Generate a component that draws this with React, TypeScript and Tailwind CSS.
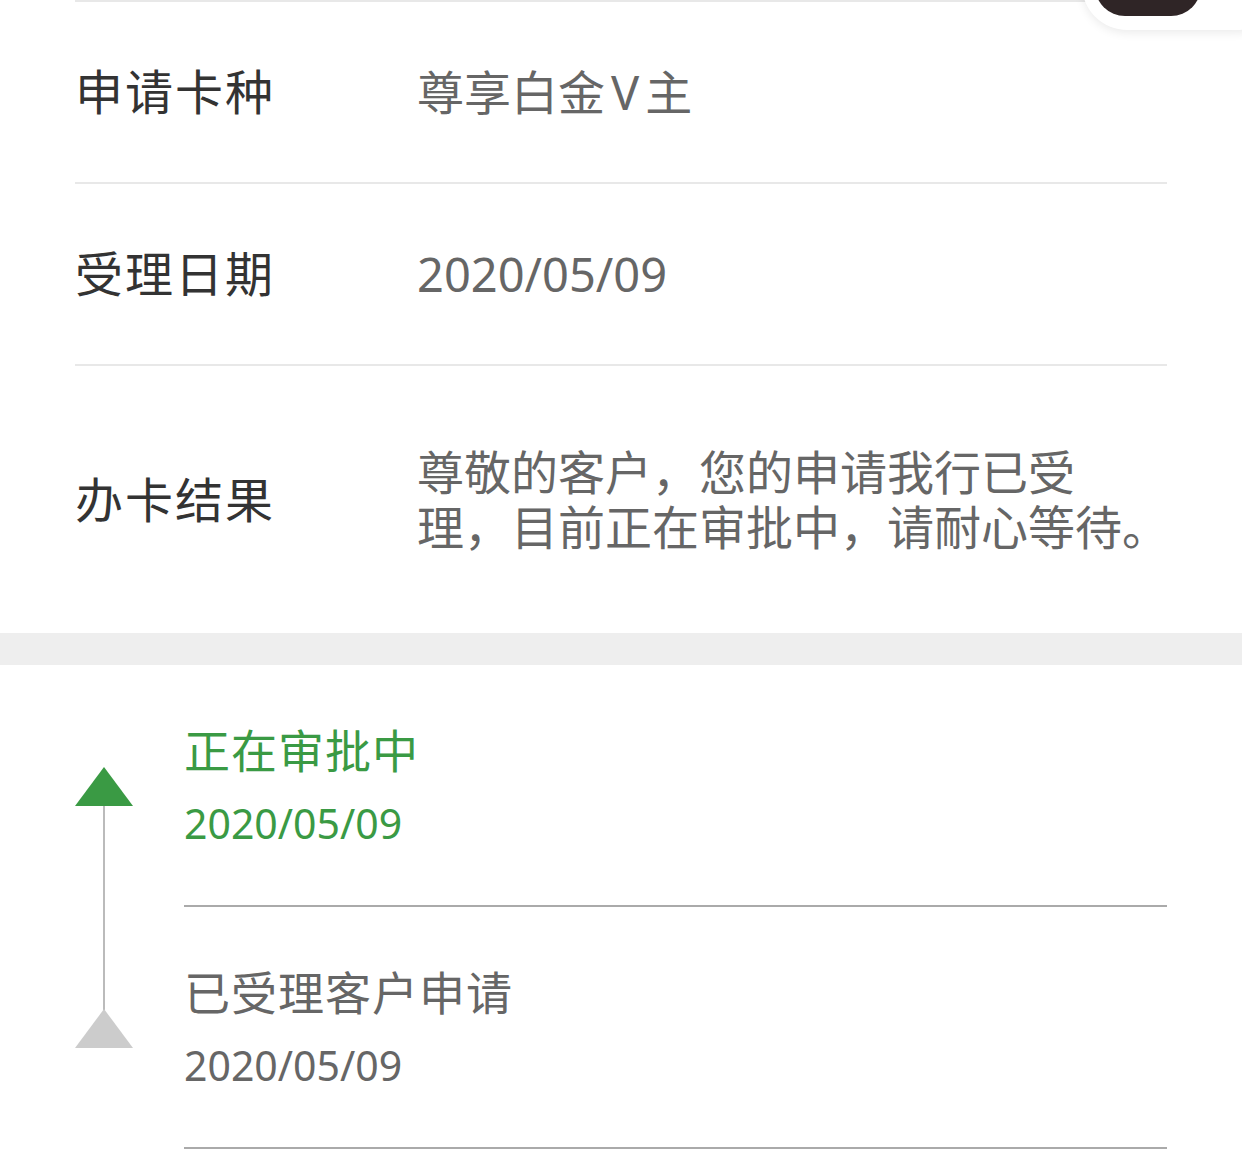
import React from "react";

const font = "font-['Noto_Sans','Noto_Sans_CJK_SC',sans-serif]";

function Row({ label, children, h }: { label: string; children: React.ReactNode; h: string }) {
  return (
    <div className={`mx-[75px] flex items-center ${h}`}>
      <div className="w-[342px] shrink-0 text-[48px] leading-[56px] tracking-[2px] text-[#333333]">{label}</div>
      <div className="flex-1 text-[47px] leading-[55px] text-[#666666]">{children}</div>
    </div>
  );
}

function Divider() {
  return <div className="mx-[75px] h-[2px] bg-[#e8e8e8]" />;
}

function Tri({ color }: { color: string }) {
  return (
    <svg width="58" height="39" viewBox="0 0 58 39" className="absolute left-0 top-[102px]">
      <polygon points="29,0 58,39 0,39" fill={color} />
    </svg>
  );
}

function Item({ title, date, active }: { title: string; date: string; active: boolean }) {
  return (
    <div className="ml-[75px] flex">
      <div className="relative w-[109px] shrink-0">
        <Tri color={active ? "#3a9a44" : "#cccccc"} />
      </div>
      <div className="mr-[75px] flex-1 border-b-2 border-[#aaaaaa] pt-[57px] pb-[56px]">
        <div className={`text-[46px] leading-[56px] tracking-[1px] ${active ? "text-[#3a9a44]" : "text-[#666666]"}`}>{title}</div>
        <div className={`mt-[20px] text-[41px] leading-[51px] ${active ? "text-[#3a9a44]" : "text-[#666666]"}`}>{date}</div>
      </div>
    </div>
  );
}

export default function App() {
  return (
    <div className={`relative h-[1155px] w-[1242px] overflow-hidden bg-white ${font}`}>
      <Divider />
      <Row label="申请卡种" h="h-[180px]">
        尊享白金<span className="mx-[6px]">V</span>主
      </Row>
      <Divider />
      <Row label="受理日期" h="h-[180px]">2020/05/09</Row>
      <Divider />
      <Row label="办卡结果" h="h-[267px]">
        <span className="block whitespace-nowrap">尊敬的客户，您的申请我行已受</span>
        <span className="block whitespace-nowrap">理，目前正在审批中，请耐心等待。</span>
      </Row>
      <div className="h-[32px] bg-[#eeeeee]" />
      <div className="relative">
        <div className="absolute left-[103px] top-[141px] h-[204px] w-[2px] bg-[#bbbbbb]" />
        <Item title="正在审批中" date="2020/05/09" active />
        <Item title="已受理客户申请" date="2020/05/09" active={false} />
      </div>
      <div className="absolute left-[1082px] top-[-60px] h-[90px] w-[200px] rounded-[45px] bg-white shadow-[0_3px_10px_rgba(0,0,0,0.08)]">
        <div className="absolute left-[13px] top-[16px] h-[60px] w-[106px] rounded-[30px] bg-[#2f2526]" />
      </div>
    </div>
  );
}
